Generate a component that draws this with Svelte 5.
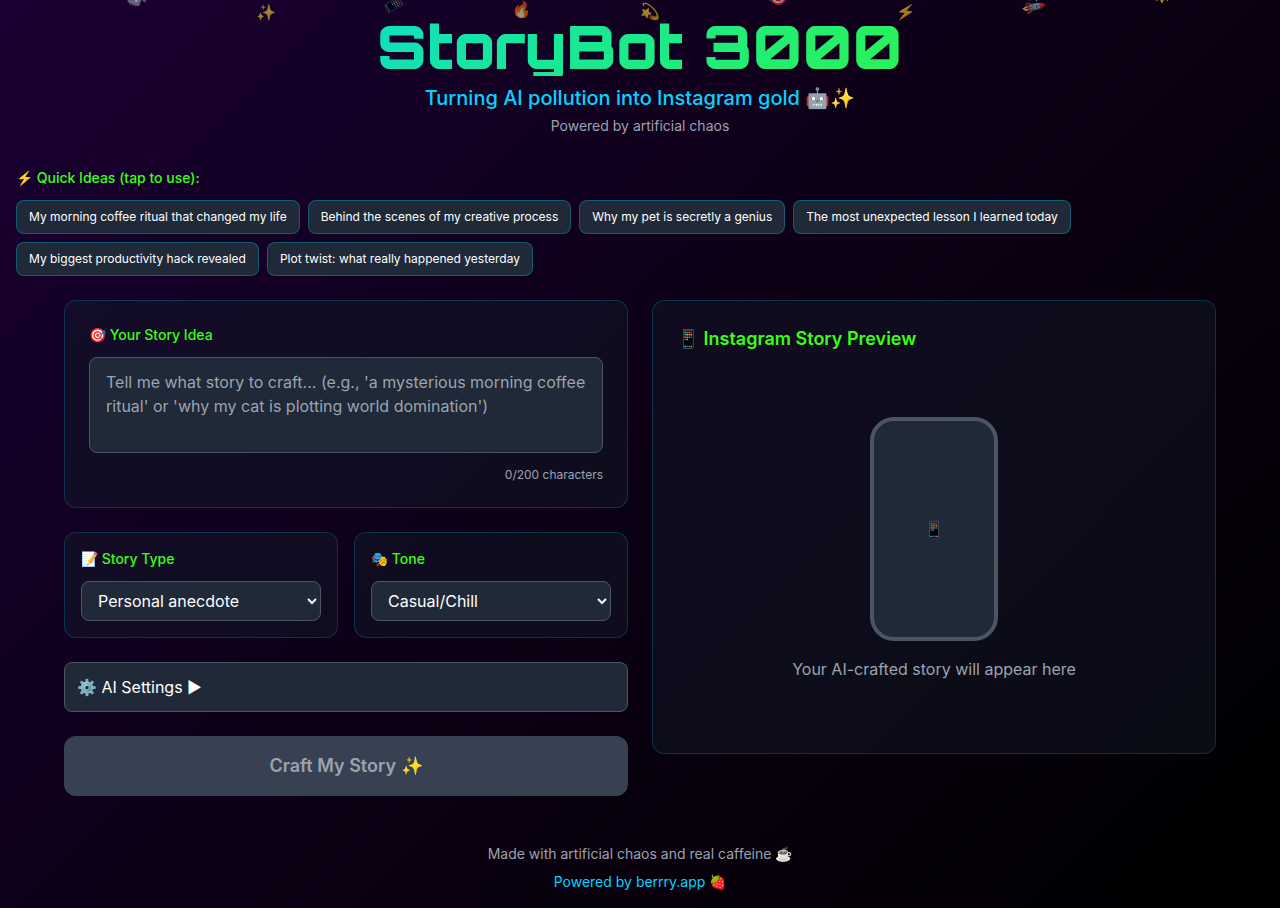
<script lang="ts">
	interface Floater {
		emoji: string;
		left: number;
		top: number;
		rotate: number;
	}

	const MAX_CHARS = 200;

	const quickIdeas = [
		'My morning coffee ritual that changed my life',
		'Behind the scenes of my creative process',
		'Why my pet is secretly a genius',
		'The most unexpected lesson I learned today',
		'My biggest productivity hack revealed',
		'Plot twist: what really happened yesterday'
	];

	const storyTypes = ['Personal anecdote', 'Behind the scenes', 'Life lesson', 'Plot twist', 'Product hype'];
	const tones = ['Casual/Chill', 'Dramatic', 'Funny', 'Inspirational', 'Mysterious'];

	const floaters: Floater[] = [
		{ emoji: '🤖', left: 10, top: -14, rotate: 110 },
		{ emoji: '✨', left: 20, top: 0, rotate: 0 },
		{ emoji: '📱', left: 30, top: -7, rotate: 60 },
		{ emoji: '🔥', left: 40, top: -3, rotate: 16 },
		{ emoji: '💫', left: 50, top: -1, rotate: 0 },
		{ emoji: '🎯', left: 60, top: -15, rotate: 190 },
		{ emoji: '⚡', left: 70, top: -1, rotate: 8 },
		{ emoji: '🚀', left: 80, top: -5, rotate: 34 },
		{ emoji: '🌟', left: 90, top: -17, rotate: 180 }
	];

	let idea = $state('');
	let storyType = $state(storyTypes[0]);
	let tone = $state(tones[0]);
	let showSettings = $state(false);
	let creativity = $state(7);
	let story = $state('');

	function craftStory() {
		if (!idea.trim()) return;
		story = `${storyType} (${tone}): ${idea}`;
	}
</script>

<div class="app">
	<div class="floaters" aria-hidden="true">
		{#each floaters as f}
			<span style="left: {f.left}%; top: {f.top}px; transform: rotate({f.rotate}deg)">{f.emoji}</span>
		{/each}
	</div>

	<header>
		<h1>StoryBot 3000</h1>
		<p class="tagline">Turning AI pollution into Instagram gold 🤖✨</p>
		<p class="powered">Powered by artificial chaos</p>
	</header>

	<section class="ideas">
		<h2 class="label">⚡ Quick Ideas (tap to use):</h2>
		<div class="chips">
			{#each quickIdeas as quickIdea}
				<button class="chip" onclick={() => (idea = quickIdea)}>{quickIdea}</button>
			{/each}
		</div>
	</section>

	<main>
		<div class="form">
			<div class="card">
				<label class="label" for="idea">🎯 Your Story Idea</label>
				<textarea
					id="idea"
					maxlength={MAX_CHARS}
					bind:value={idea}
					placeholder="Tell me what story to craft... (e.g., 'a mysterious morning coffee ritual' or 'why my cat is plotting world domination')"
				></textarea>
				<p class="count">{idea.length}/{MAX_CHARS} characters</p>
			</div>

			<div class="options">
				<div class="card small">
					<label class="label" for="story-type">📝 Story Type</label>
					<select id="story-type" bind:value={storyType}>
						{#each storyTypes as type}
							<option>{type}</option>
						{/each}
					</select>
				</div>
				<div class="card small">
					<label class="label" for="tone">🎭 Tone</label>
					<select id="tone" bind:value={tone}>
						{#each tones as t}
							<option>{t}</option>
						{/each}
					</select>
				</div>
			</div>

			<button class="settings" aria-expanded={showSettings} onclick={() => (showSettings = !showSettings)}>
				⚙️ AI Settings {showSettings ? '▼' : '▶'}
			</button>
			{#if showSettings}
				<div class="card small">
					<label class="label" for="creativity">Creativity</label>
					<input id="creativity" type="range" min="1" max="10" bind:value={creativity} />
				</div>
			{/if}

			<button class="craft" disabled={!idea.trim()} onclick={craftStory}>Craft My Story ✨</button>
		</div>

		<section class="card preview">
			<h2>📱 Instagram Story Preview</h2>
			<div class="empty">
				<div class="phone">📱</div>
				<p>{story || 'Your AI-crafted story will appear here'}</p>
			</div>
		</section>
	</main>

	<footer>
		<p>Made with artificial chaos and real caffeine ☕</p>
		<a href="https://berrry.app">Powered by berrry.app 🍓</a>
	</footer>
</div>

<style>
	:global(body) {
		background: #000;
	}

	.app,
	.app * {
		box-sizing: border-box;
	}

	.app {
		position: relative;
		min-height: 100vh;
		overflow: hidden;
		background: linear-gradient(135deg, #1a0033 0%, #0d0015 50%, #000 100%);
		color: #fff;
		font-family: Inter, 'Liberation Sans', sans-serif;
		font-size: 16px;
		line-height: 24px;
	}

	h1,
	h2,
	p {
		margin: 0;
	}

	button,
	select,
	textarea {
		font: inherit;
		color: inherit;
	}

	button {
		cursor: pointer;
	}

	.floaters span {
		position: absolute;
		width: 20px;
		text-align: center;
		opacity: 0.6;
		pointer-events: none;
	}

	header {
		position: relative;
		padding: 16px;
		text-align: center;
	}

	h1 {
		margin-bottom: 8px;
		background: linear-gradient(135deg, #00d4ff, #39ff14);
		background-clip: text;
		color: transparent;
		font-family: Orbitron, 'DejaVu Sans', sans-serif;
		font-size: 60px;
		font-weight: 900;
		line-height: 60px;
	}

	.tagline {
		color: #00d4ff;
		font-size: 20px;
		font-weight: 500;
		line-height: 28px;
	}

	.powered {
		margin-top: 4px;
		color: #9ca3af;
		font-size: 14px;
		line-height: 20px;
	}

	.label {
		display: block;
		margin-bottom: 12px;
		color: #39ff14;
		font-size: 14px;
		font-weight: 500;
		line-height: 20px;
	}

	.ideas {
		padding: 16px 16px 24px;
	}

	.chips {
		display: flex;
		flex-wrap: wrap;
		gap: 8px;
	}

	.chip {
		padding: 8px 12px;
		border: 1px solid rgba(0, 212, 255, 0.3);
		border-radius: 8px;
		background: #1f2937;
		font-size: 12px;
		line-height: 16px;
	}

	.chip:hover {
		border-color: #00d4ff;
	}

	main {
		display: grid;
		grid-template-columns: 1fr 1fr;
		align-items: start;
		gap: 24px;
		max-width: 1152px;
		margin: 0 auto;
	}

	.form {
		display: flex;
		flex-direction: column;
		gap: 24px;
	}

	.card {
		padding: 24px;
		border: 1px solid rgba(0, 212, 255, 0.2);
		border-radius: 12px;
		background: rgba(17, 24, 39, 0.5);
	}

	.small {
		padding: 16px;
	}

	textarea {
		display: block;
		width: 100%;
		height: 96px;
		padding: 12px 16px;
		border: 1px solid #4b5563;
		border-radius: 8px;
		background: #1f2937;
		resize: none;
	}

	textarea::placeholder {
		color: #9ca3af;
	}

	.count {
		margin-top: 14px;
		color: #9ca3af;
		font-size: 12px;
		line-height: 16px;
		text-align: right;
	}

	.options {
		display: grid;
		grid-template-columns: 1fr 1fr;
		gap: 16px;
	}

	select {
		display: block;
		width: 100%;
		height: 40px;
		padding: 0 12px;
		border: 1px solid #4b5563;
		border-radius: 8px;
		background: #1f2937;
	}

	.settings {
		padding: 12px;
		border: 1px solid #4b5563;
		border-radius: 8px;
		background: #1f2937;
		text-align: left;
	}

	.craft {
		padding: 16px;
		border: none;
		border-radius: 12px;
		background: linear-gradient(90deg, #00d4ff, #39ff14);
		color: #000;
		font-size: 18px;
		font-weight: 600;
		line-height: 28px;
	}

	.craft:disabled {
		background: #374151;
		color: #9ca3af;
		cursor: not-allowed;
	}

	.preview h2 {
		margin-bottom: 16px;
		color: #39ff14;
		font-size: 18px;
		font-weight: 600;
		line-height: 28px;
	}

	.empty {
		display: flex;
		flex-direction: column;
		align-items: center;
		gap: 16px;
		padding: 48px 0;
		color: #9ca3af;
	}

	.phone {
		display: flex;
		align-items: center;
		justify-content: center;
		width: 128px;
		height: 224px;
		border: 4px solid #4b5563;
		border-radius: 24px;
		background: #1f2937;
	}

	footer {
		display: flex;
		flex-direction: column;
		align-items: center;
		gap: 8px;
		padding: 48px 16px 16px;
		color: #9ca3af;
		font-size: 14px;
		line-height: 20px;
	}

	footer a {
		color: #00d4ff;
		text-decoration: none;
	}

	@media (max-width: 900px) {
		main {
			grid-template-columns: 1fr;
			padding: 0 16px;
		}
	}
</style>
